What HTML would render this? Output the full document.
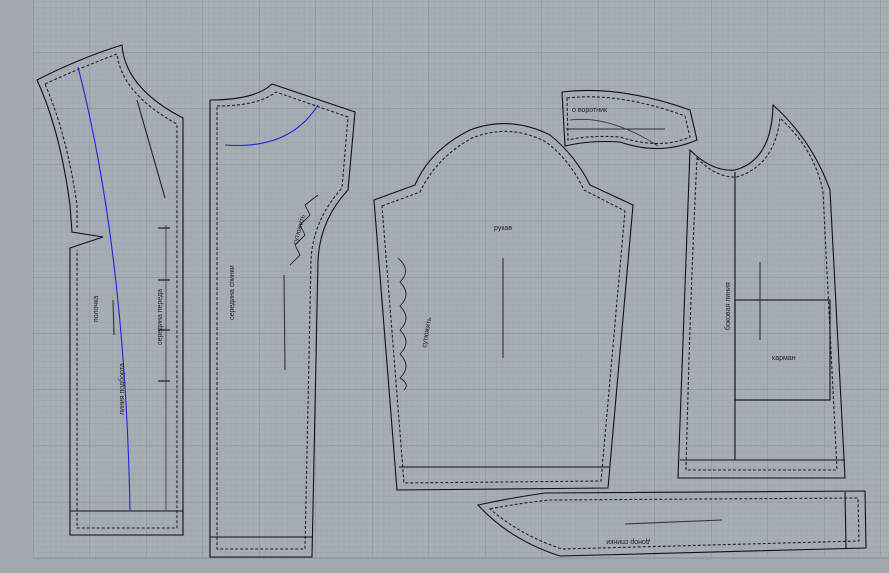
<!DOCTYPE html>
<html><head><meta charset="utf-8"><style>
html,body{margin:0;padding:0;background:#a3a8ae;width:889px;height:573px;overflow:hidden}
svg{display:block}
text{font-family:"Liberation Sans",sans-serif;font-size:7px;fill:#222}
</style></head><body>
<svg width="889" height="573" viewBox="0 0 889 573">
<defs>
<pattern id="mn" x="33" y="-4" width="5.65" height="5.62" patternUnits="userSpaceOnUse">
<path d="M0 0H5.65M0 0V5.62" stroke="#99a0a8" stroke-width="0.6" fill="none"/>
</pattern>
<pattern id="mj" x="33" y="-4" width="56.5" height="56.2" patternUnits="userSpaceOnUse">
<path d="M0 0H56.5M0 0V56.2" stroke="#858c94" stroke-width="0.9" fill="none"/>
</pattern>
</defs>
<rect x="33" y="0" width="856" height="558" fill="#a6adb5"/>
<rect x="33" y="0" width="856" height="558" fill="url(#mn)"/>
<rect x="33" y="0" width="856" height="558" fill="url(#mj)"/>
<line x1="33" y1="558" x2="889" y2="558" stroke="#858c94"/>

<g fill="none" stroke="#111" stroke-width="1.1">
<!-- front -->
<path d="M37 80 Q80 58 122 45 Q125 88 183 118 L183 535 L70 535 L70 248 L103 237 L72 232 L70 205 Q60 130 37 80Z"/>
<path d="M45 84 Q82 67 117 54 Q122 94 177 124 L177 528 L77 528 L77 250 M77 228 L77 205 Q67 135 45 84" stroke-dasharray="3 2" stroke="#222"/>
<line x1="70" y1="511" x2="183" y2="511"/>
<line x1="166" y1="510" x2="166" y2="225" stroke="#555"/>
<line x1="137" y1="100" x2="165" y2="198" stroke="#222"/>
<line x1="158" y1="228" x2="170" y2="228"/><line x1="158" y1="280" x2="170" y2="280"/><line x1="158" y1="330" x2="170" y2="330"/><line x1="158" y1="381" x2="170" y2="381"/>
<line x1="113" y1="300" x2="114" y2="335" stroke="#333"/>
<!-- back -->
<path d="M210 100 Q255 100 272 84 L355 112 L348 190 Q320 220 318 260 L312 557 L210 557Z"/>
<path d="M217 106 Q258 106 276 92 L348 117 L342 188 Q313 220 311 260 L305 549 L217 549Z" stroke-dasharray="3 2" stroke="#222"/>
<line x1="210" y1="537" x2="312" y2="537"/>
<line x1="284" y1="275" x2="285" y2="370" stroke="#333"/>
<path d="M290 265 L300 255 L295 245 L305 235 L300 225 L310 215 L305 205 L318 195" stroke-width="0.8"/>
<!-- sleeve -->
<path d="M374 200 L415 185 Q430 150 470 130 Q510 115 550 135 Q575 155 590 185 L633 205 L608 488 L397 490Z"/>
<path d="M382 206 L420 192 Q436 158 472 138 Q510 123 546 142 Q570 160 584 190 L625 211 L601 481 L404 483Z" stroke-dasharray="3 2" stroke="#222"/>
<line x1="399" y1="467" x2="609" y2="467"/>
<line x1="503" y1="258" x2="503" y2="358" stroke="#333"/>
<path d="M398 258 Q412 270 400 282 Q412 294 400 306 Q412 318 400 330 Q412 342 400 354 Q412 366 400 378 Q410 384 404 390" stroke-width="0.8"/>
<!-- collar -->
<path d="M562 92 Q620 85 690 110 L697 140 Q660 156 620 142 Q590 140 565 146Z"/>
<path d="M567 98 Q620 92 685 116 L690 137 Q660 150 620 137 Q590 135 568 140Z" stroke-dasharray="3 2" stroke="#222"/>
<line x1="566" y1="129" x2="665" y2="129" stroke="#333"/>
<path d="M570 120 Q610 115 658 146" stroke="#333" stroke-width="0.8"/>
<!-- right piece -->
<path d="M690 150 Q712 172 735 170 Q772 160 773 105 Q812 140 830 190 L845 478 L678 478 Q684 300 690 150Z"/>
<path d="M697 158 Q716 178 737 177 Q775 165 780 118 Q815 150 823 192 L837 470 L686 470 Q690 300 697 158Z" stroke-dasharray="3 2" stroke="#222"/>
<line x1="680" y1="460" x2="845" y2="460"/>
<line x1="735" y1="172" x2="735" y2="460"/>
<rect x="735" y="300" width="95" height="100"/>
<line x1="760" y1="262" x2="760" y2="340" stroke="#333"/>
<!-- bottom strip -->
<path d="M478 505 Q510 498 545 493 L865 491 L866 548 L560 556 Q510 540 478 505Z"/>
<path d="M490 509 Q520 503 550 500 L858 498 L859 541 L562 549 Q520 535 490 509Z" stroke-dasharray="3 2" stroke="#222"/>
<line x1="845" y1="492" x2="846" y2="548"/>
<line x1="625" y1="524" x2="722" y2="520" stroke="#333"/>
</g>
<path d="M78 67 Q125 250 130 510" fill="none" stroke="#2222dd" stroke-width="1.1"/>
<path d="M225 145 Q290 150 318 105" fill="none" stroke="#2222dd" stroke-width="1.1"/>
<text transform="translate(98 322) rotate(-90)">полочка</text>
<text transform="translate(124 415) rotate(-90)">линия подборта</text>
<text transform="translate(162 345) rotate(-90)">середина переда</text>
<text transform="translate(234 320) rotate(-90)">середина спинки</text>
<text transform="translate(297 245) rotate(-75)">сутюжить</text>
<text x="494" y="230">рукав</text>
<text transform="translate(426 348) rotate(-80)">сутюжить</text>
<text x="572" y="112">о воротник</text>
<text transform="translate(730 330) rotate(-90)">боковая линия</text>
<text x="772" y="360">карман</text>
<text transform="translate(650 540) rotate(180)">донор спинки</text>
</svg>
</body></html>
